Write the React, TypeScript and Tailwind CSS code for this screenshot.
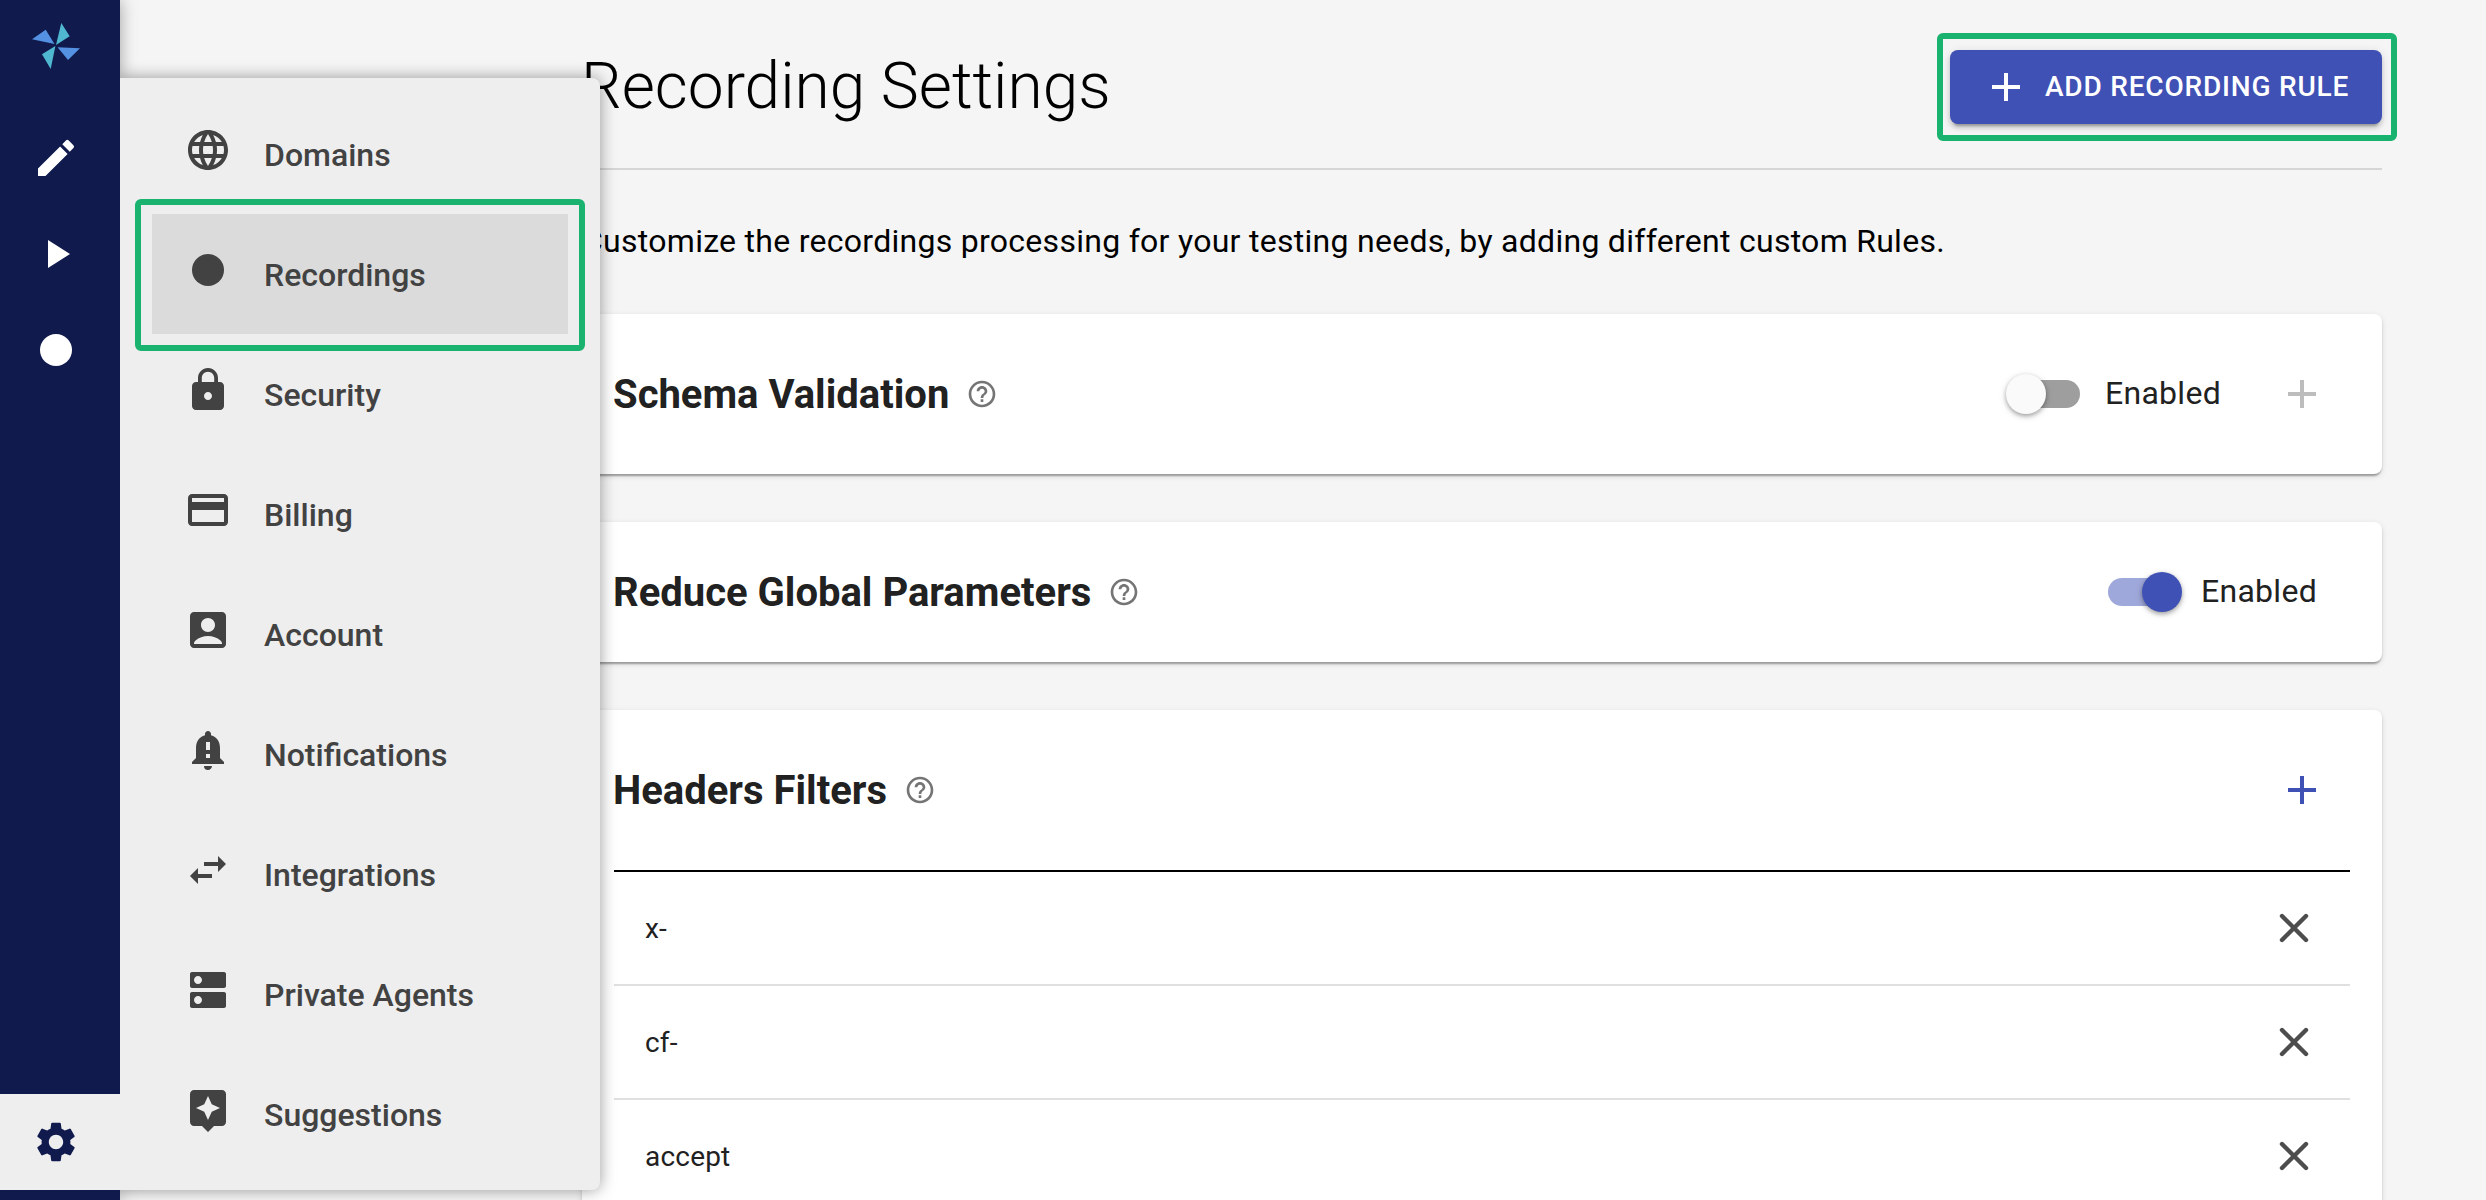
import type { ReactNode } from 'react';
import {
  MdAccountBox,
  MdAdd,
  MdAssistant,
  MdCreate,
  MdDns,
  MdFiberManualRecord,
  MdHelpOutline,
  MdLanguage,
  MdLock,
  MdNotificationImportant,
  MdPayment,
  MdPlayArrow,
  MdSettings,
  MdSwapHoriz,
} from 'react-icons/md';

const menuItems = [
  { label: 'Domains', Icon: MdLanguage },
  { label: 'Recordings', Icon: MdFiberManualRecord },
  { label: 'Security', Icon: MdLock },
  { label: 'Billing', Icon: MdPayment },
  { label: 'Account', Icon: MdAccountBox },
  { label: 'Notifications', Icon: MdNotificationImportant },
  { label: 'Integrations', Icon: MdSwapHoriz },
  { label: 'Private Agents', Icon: MdDns },
  { label: 'Suggestions', Icon: MdAssistant },
];

const headerFilters = ['x-', 'cf-', 'accept'];

function Logo() {
  return (
    <svg viewBox="0 0 48 48" className="size-12">
      <path d="M29.3 1 37.7 14.3 24 23z" fill="#4fb8d0" />
      <path d="M0 17.3 13.7 7.7 22.5 22z" fill="#5491e2" />
      <path d="M25.6 25.2 48 26.3 36 38z" fill="#5491e2" />
      <path d="M23.4 24 10 32.3 18.7 47z" fill="#4fb8d0" />
    </svg>
  );
}

function Sidebar() {
  return (
    <nav className="relative flex h-[1200px] w-[120px] shrink-0 flex-col bg-[#101a4d] text-white shadow-[0_0_16px_rgba(0,0,0,0.35)]">
      <div className="flex h-[110px] pt-[22px] pl-8">
        <Logo />
      </div>
      <div className="flex h-24 items-center pl-8">
        <MdCreate className="size-12" />
      </div>
      <div className="flex h-24 items-center pl-8">
        <MdPlayArrow className="size-12" />
      </div>
      <div className="flex h-24 items-center pl-8">
        <MdFiberManualRecord className="size-12" />
      </div>
      <div className="mt-auto mb-2.5 flex h-24 items-center bg-[#eeeeee] pl-8 text-[#101a4d]">
        <MdSettings className="size-12" />
      </div>
    </nav>
  );
}

function SettingsMenu() {
  return (
    <div className="absolute top-[78px] left-[120px] z-10 w-[480px] rounded-r-lg bg-[#eeeeee] px-8 py-4 text-[#424242] shadow-[0_0_16px_rgba(0,0,0,0.4)] [clip-path:inset(-24px_-24px_-24px_0)]">
      {menuItems.map(({ label, Icon }) => (
        <div
          key={label}
          className={
            label === 'Recordings'
              ? 'relative flex h-[120px] items-center bg-[#dbdbdb] pl-8'
              : 'relative flex h-[120px] items-center pl-8'
          }
        >
          <Icon className="mb-2 size-12" />
          <span className="ml-8 pt-0.5 text-[32px] leading-none font-medium">{label}</span>
          {label === 'Recordings' && (
            <div className="absolute -inset-x-[17px] -top-[15px] -bottom-[17px] rounded-md border-6 border-[#1ab26f]" />
          )}
        </div>
      ))}
    </div>
  );
}

function Toggle({ on }: { on: boolean }) {
  return (
    <div
      className={
        on
          ? 'relative flex h-7 w-[72px] rounded-full bg-[#9fa8da]'
          : 'relative flex h-7 w-[72px] rounded-full bg-[#9e9e9e]'
      }
    >
      <div
        className={
          on
            ? 'absolute -top-1.5 -right-0.5 size-10 rounded-full bg-[#3f51b5] shadow-[0_2px_4px_rgba(0,0,0,0.3),0_2px_8px_rgba(0,0,0,0.12)]'
            : 'absolute -top-1.5 -left-0.5 size-10 rounded-full bg-[#fafafa] shadow-[0_2px_4px_rgba(0,0,0,0.3),0_2px_8px_rgba(0,0,0,0.12)]'
        }
      />
    </div>
  );
}

function CardTitle({ children }: { children: ReactNode }) {
  return (
    <div className="flex items-center">
      <h2 className="-ml-px pt-0.5 text-[40px] leading-none font-bold whitespace-nowrap">{children}</h2>
      <MdHelpOutline className="ml-[17px] size-8 text-[#757575]" />
    </div>
  );
}

const cardClass =
  'rounded-lg bg-white px-8 shadow-[0_4px_2px_-2px_rgba(0,0,0,0.2),0_2px_2px_rgba(0,0,0,0.14),0_2px_6px_rgba(0,0,0,0.12)]';

function Close() {
  return (
    <svg viewBox="0 0 24 24" className="size-12 text-[#4d4d4d]">
      <path d="M6 6 18 18M18 6 6 18" stroke="currentColor" strokeWidth="2.2" strokeLinecap="round" />
    </svg>
  );
}

export default function App() {
  return (
    <div className="relative flex h-[1200px] w-[2486px] overflow-hidden bg-[#f5f5f5] font-['Roboto',sans-serif] text-[#212121]">
      <Sidebar />
      <SettingsMenu />
      <main className="ml-[462px] w-[1800px]">
        <header className="flex h-[170px] items-start justify-between border-b-2 border-[#d6d6d6]">
          <h1 className="mt-[55px] -ml-px text-[64px] leading-none font-light text-black">Recording Settings</h1>
          <button className="relative mt-[50px] flex h-[74px] w-[432px] items-center rounded-lg bg-[#3f51b5] pl-8 text-white shadow-[0_6px_2px_-4px_rgba(0,0,0,0.2),0_4px_4px_rgba(0,0,0,0.14),0_2px_10px_rgba(0,0,0,0.12)]">
            <MdAdd className="size-12" />
            <span className="ml-[15px] text-[28px] leading-none font-medium tracking-[0.8px] whitespace-nowrap">ADD RECORDING RULE</span>
            <span className="absolute -top-[17px] -right-[15px] -bottom-[17px] -left-[13px] rounded-md border-6 border-[#1ab26f]" />
          </button>
        </header>
        <p className="flex h-36 items-center pb-0.5 text-[32px] leading-none tracking-[0.28px] text-black">
          Customize the recordings processing for your testing needs, by adding different custom Rules.
        </p>
        <div className="flex flex-col gap-12">
          <section className={`${cardClass} flex h-40 items-center justify-between`}>
            <CardTitle>Schema Validation</CardTitle>
            <div className="flex items-center pr-6">
              <Toggle on={false} />
              <span className="ml-[25px] w-[173px] pb-0.5 text-[32px] leading-none tracking-[0.28px]">Enabled</span>
              <MdAdd className="size-12 text-[#bdbdbd]" />
            </div>
          </section>
          <section className={`${cardClass} flex h-[140px] items-center justify-between`}>
            <CardTitle>Reduce Global Parameters</CardTitle>
            <div className="flex items-center">
              <Toggle on />
              <span className="ml-[21px] w-[149px] pb-0.5 text-[32px] leading-none tracking-[0.28px]">Enabled</span>
            </div>
          </section>
          <section className={`${cardClass} h-[520px]`}>
            <div className="flex h-[162px] items-center justify-between border-b-2 border-black pr-6">
              <CardTitle>Headers Filters</CardTitle>
              <MdAdd className="size-12 text-[#3f51b5]" />
            </div>
            {headerFilters.map((name) => (
              <div key={name} className="flex h-[114px] items-center justify-between border-b-2 border-[#e0e0e0] pr-8 pl-[31px]">
                <span className="pt-0.5 text-[28px] leading-none tracking-[0.2px]">{name}</span>
                <Close />
              </div>
            ))}
          </section>
        </div>
      </main>
    </div>
  );
}
